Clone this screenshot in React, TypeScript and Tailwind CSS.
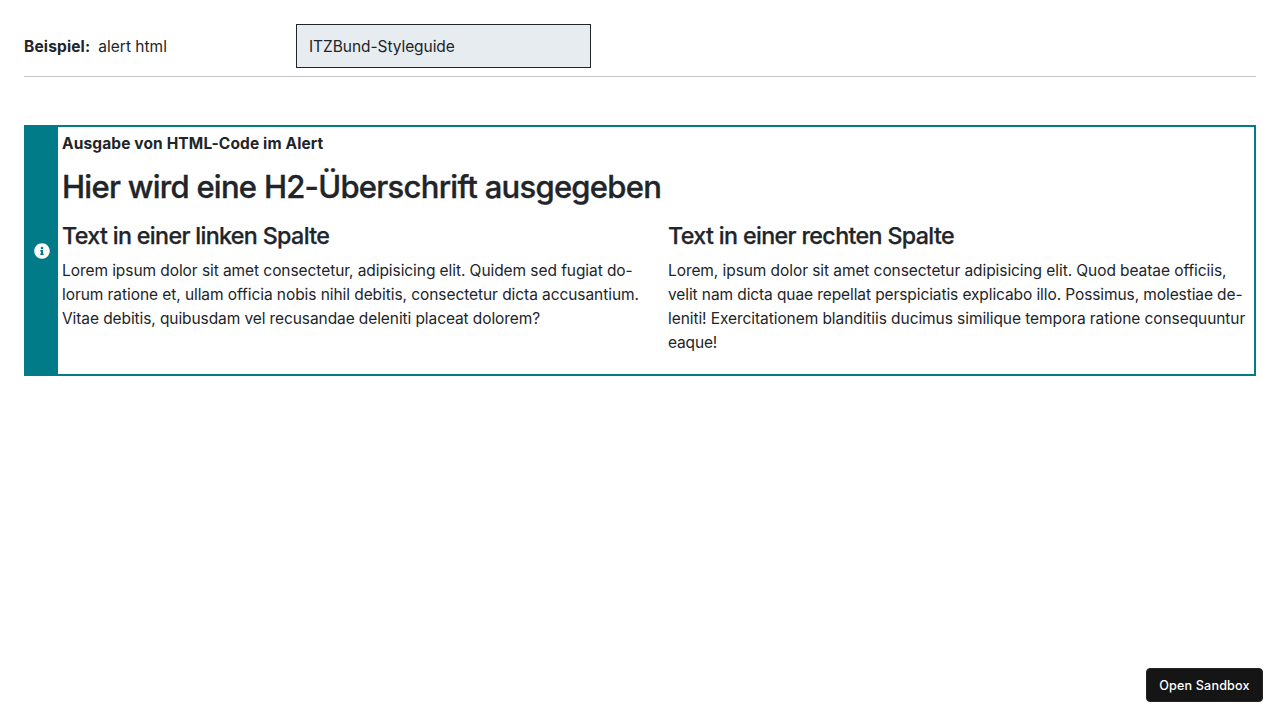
type Line = { text: string; tracking: string };

const leftLines: Line[] = [
  { text: 'Lorem ipsum dolor sit amet consectetur, adipisicing elit. Quidem sed fugiat do-', tracking: 'tracking-[-0.071px]' },
  { text: 'lorum ratione et, ullam officia nobis nihil debitis, consectetur dicta accusantium.', tracking: 'tracking-[-0.068px]' },
  { text: 'Vitae debitis, quibusdam vel recusandae deleniti placeat dolorem?', tracking: 'tracking-[-0.091px]' },
];

const rightLines: Line[] = [
  { text: 'Lorem, ipsum dolor sit amet consectetur adipisicing elit. Quod beatae officiis,', tracking: 'tracking-[-0.076px]' },
  { text: 'velit nam dicta quae repellat perspiciatis explicabo illo. Possimus, molestiae de-', tracking: 'tracking-[-0.095px]' },
  { text: 'leniti! Exercitationem blanditiis ducimus similique tempora ratione consequuntur', tracking: 'tracking-[-0.072px]' },
  { text: 'eaque!', tracking: 'tracking-[-0.15px]' },
];

function Column({ title, tracking, lines }: { title: string; tracking: string; lines: Line[] }) {
  return (
    <div className="w-[606px]">
      <h3 className={`mb-[9px] h-[29px] whitespace-nowrap text-[23.25px] leading-[29px] font-medium [-webkit-text-stroke:0.25px_#212529] ${tracking}`}>{title}</h3>
      <p className="mb-[15px] whitespace-nowrap">
        {lines.map((line) => (
          <span key={line.text} className={`block ${line.tracking}`}>{line.text}</span>
        ))}
      </p>
    </div>
  );
}

function InfoIcon() {
  return (
    <svg viewBox="0 0 512 512" className="size-4" fill="white" aria-hidden="true">
      <path d="M256 8C119.043 8 8 119.083 8 256c0 136.997 111.043 248 248 248s248-111.003 248-248C504 119.083 392.957 8 256 8zm0 110c23.196 0 42 18.804 42 42s-18.804 42-42 42-42-18.804-42-42 18.804-42 42-42zm56 254c0 6.627-5.373 12-12 12h-88c-6.627 0-12-5.373-12-12v-24c0-6.627 5.373-12 12-12h12v-64h-12c-6.627 0-12-5.373-12-12v-24c0-6.627 5.373-12 12-12h64c6.627 0 12 5.373 12 12v100h12c6.627 0 12 5.373 12 12v24z" />
    </svg>
  );
}

export default function App() {
  return (
    <div className="flex h-screen flex-col overflow-hidden bg-white p-6 font-['Inter','Liberation_Sans',sans-serif] text-[15.5px] leading-6 text-[#212529] antialiased">
      <header className="flex h-[53px] shrink-0 border-b border-[#c6c6c6] pb-2">
        <div className="flex w-[272px] items-center gap-2 whitespace-nowrap pt-0.5">
          <strong className="font-bold tracking-[0.15px]">Beispiel:</strong>
          <span>alert html</span>
        </div>
        <div className="flex h-11 w-[295px] items-center whitespace-nowrap border border-[#212529] bg-[#e7ecf0] px-3 pt-0.5 tracking-[-0.06px]">ITZBund-Styleguide</div>
      </header>
      <section className="mt-12 flex h-[251px] shrink-0 border-2 border-[#007b87]">
        <div className="flex w-8 shrink-0 items-center justify-center bg-[#007b87]">
          <InfoIcon />
        </div>
        <div className="flex-1 px-1 pt-[5px]">
          <strong className="block whitespace-nowrap font-bold tracking-[0.12px]">Ausgabe von HTML-Code im Alert</strong>
          <h2 className="mt-3 mb-[15px] h-[38px] whitespace-nowrap text-[31px] leading-[38px] font-medium tracking-[-0.73px] [-webkit-text-stroke:0.35px_#212529]">Hier wird eine H2-Überschrift ausgegeben</h2>
          <div className="flex">
            <Column title="Text in einer linken Spalte" tracking="tracking-[-0.65px]" lines={leftLines} />
            <Column title="Text in einer rechten Spalte" tracking="tracking-[-0.64px]" lines={rightLines} />
          </div>
        </div>
      </section>
      <button className="mt-auto mr-[-7px] mb-[-6px] h-[34px] w-[117px] self-end whitespace-nowrap rounded-[4px] border border-[#252525] bg-[#151515] pt-0.5 text-[12.6px] leading-4 font-medium tracking-[0.15px] text-white">Open Sandbox</button>
    </div>
  );
}
